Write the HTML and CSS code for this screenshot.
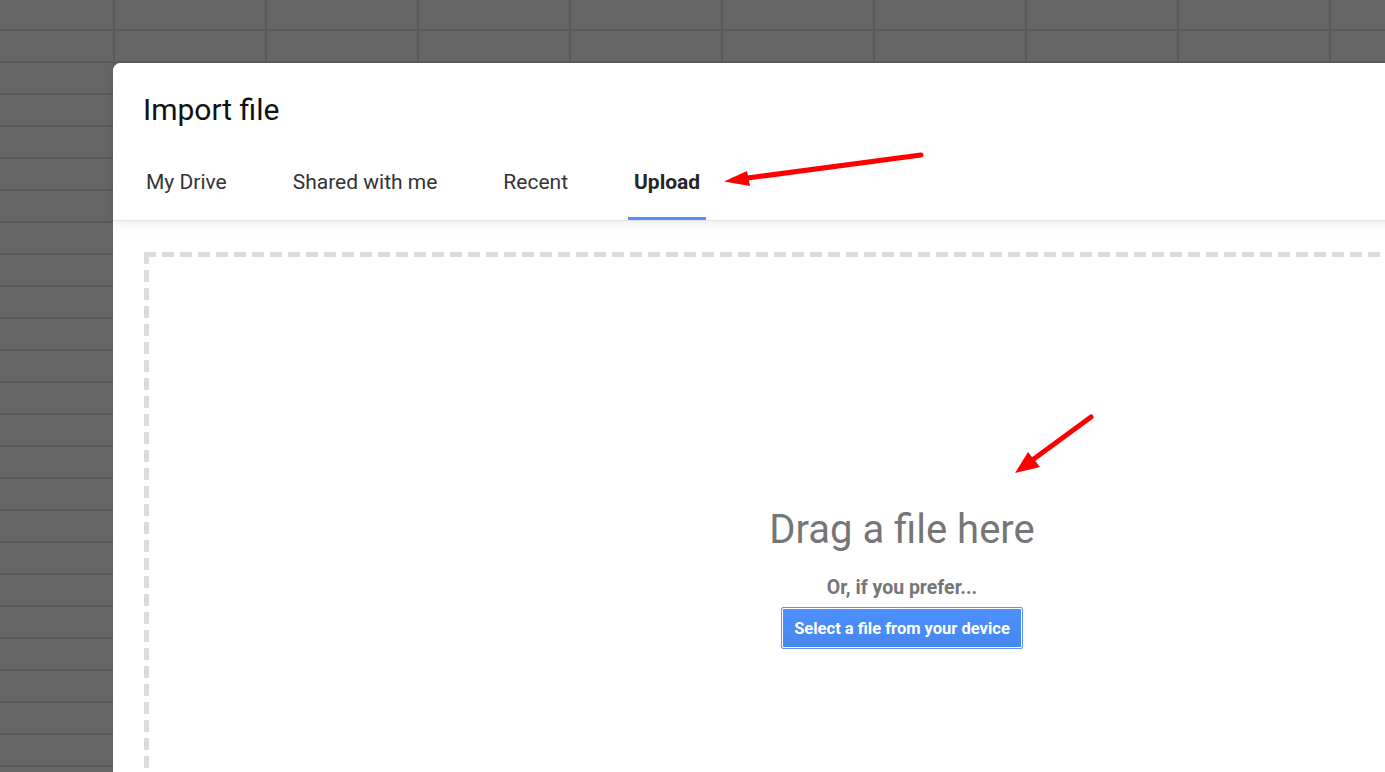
FILE: index.html
```html
<!DOCTYPE html>
<html lang="en">
  <head>
    <meta charset="UTF-8" />
    <meta name="viewport" content="width=device-width, initial-scale=1.0" />
    <title>Import file</title>
    <link rel="stylesheet" href="styles.css">
  </head>
  <body>
    <div class="sheet"></div>

    <div class="dialog">
      <div class="dialog-head">
        <h1 class="title">Import file</h1>
        <ul class="tabs">
          <li class="tab">My Drive</li>
          <li class="tab">Shared with me</li>
          <li class="tab">Recent</li>
          <li class="tab active">Upload</li>
        </ul>
      </div>
      <div class="dialog-body">
        <div class="dropzone">
          <h2 class="drop-title">Drag a file here</h2>
          <p class="drop-note">Or, if you prefer...</p>
          <button class="select-btn">Select a file from your device</button>
        </div>
      </div>
    </div>

    <!-- annotation arrows drawn over the screenshot -->
    <svg class="arrows" width="1385" height="772" viewBox="0 0 1385 772">
      <line x1="921" y1="155" x2="744" y2="178.5" stroke="#ff0000" stroke-width="5" stroke-linecap="round" />
      <polygon points="724,181.5 747,171 750,186" fill="#ff0000" />
      <line x1="1091" y1="417" x2="1031" y2="461" stroke="#ff0000" stroke-width="5" stroke-linecap="round" />
      <polygon points="1015,473 1028,452 1040,467" fill="#ff0000" />
    </svg>
  </body>
</html>
```

FILE: styles.css
```css
* {
  margin: 0;
  padding: 0;
  box-sizing: border-box;
}
body {
  width: 100vw;
  height: 100vh;
  overflow: hidden;
  background-color: #666666;
  font-family: Roboto, "Liberation Sans", sans-serif;
  position: relative;
}
.sheet {
  width: 100%;
  height: 100%;
  background-image:
    repeating-linear-gradient(to right, transparent 0 113px, #5a5a5a 113px 115px, transparent 115px 152px),
    repeating-linear-gradient(to bottom, transparent 0 29px, #5a5a5a 29px 31px, transparent 31px 32px);
}
.dialog {
  position: absolute;
  left: 113px;
  top: 63px;
  width: 1578px;
  height: 760px;
  background-color: #ffffff;
  border-radius: 8px 8px 0 0;
  display: flex;
  flex-direction: column;
  z-index: 1;
}
.dialog-head {
  padding: 29px 0 0 30px;
  position: relative;
  z-index: 1;
  border-radius: 8px 8px 0 0;
  background-color: #ffffff;
  box-shadow: 0 1px 1px rgba(0, 0, 0, 0.07), 0 4px 14px rgba(0, 0, 0, 0.08);
}
.title {
  font-size: 30px;
  font-weight: 400;
  line-height: 36px;
  color: #111111;
  margin-bottom: 28px;
}
.tabs {
  list-style: none;
  display: flex;
  gap: 54px;
  margin-left: -3px;
}
.tab {
  font-size: 21px;
  line-height: 24px;
  color: #333333;
  padding: 14px 6px 23px;
  border-bottom: 3px solid transparent;
}
.tab.active {
  font-weight: 700;
  color: #262626;
  border-bottom-color: #4d90fe;
}
.dialog-body {
  flex: 1;
  padding: 32px 31px 0;
}
.dropzone {
  height: 100%;
  background:
    repeating-linear-gradient(to right, #dcdcdc 0 12px, transparent 12px 18px) top left / 100% 5px no-repeat,
    repeating-linear-gradient(to bottom, #dcdcdc 0 12px, transparent 12px 18px) top left / 5px 100% no-repeat;
  display: flex;
  flex-direction: column;
  align-items: center;
  padding-top: 254px;
}
.drop-title {
  font-size: 40px;
  font-weight: 400;
  line-height: 48px;
  color: #767676;
}
.drop-note {
  margin-top: 23px;
  font-size: 19.5px;
  font-weight: 700;
  line-height: 22px;
  color: #767676;
}
.select-btn {
  margin-top: 8px;
  height: 42px;
  padding: 0 12px;
  font-family: Roboto, "Liberation Sans", sans-serif;
  font-size: 16.5px;
  font-weight: 700;
  color: #ffffff;
  background: linear-gradient(#4d90fe, #4787ed);
  border: 1px solid #5b95f2;
  border-radius: 2px;
  box-shadow: inset 0 0 0 1px #ffffff;
}
.arrows {
  position: absolute;
  left: 0;
  top: 0;
  z-index: 2;
  pointer-events: none;
}
```
